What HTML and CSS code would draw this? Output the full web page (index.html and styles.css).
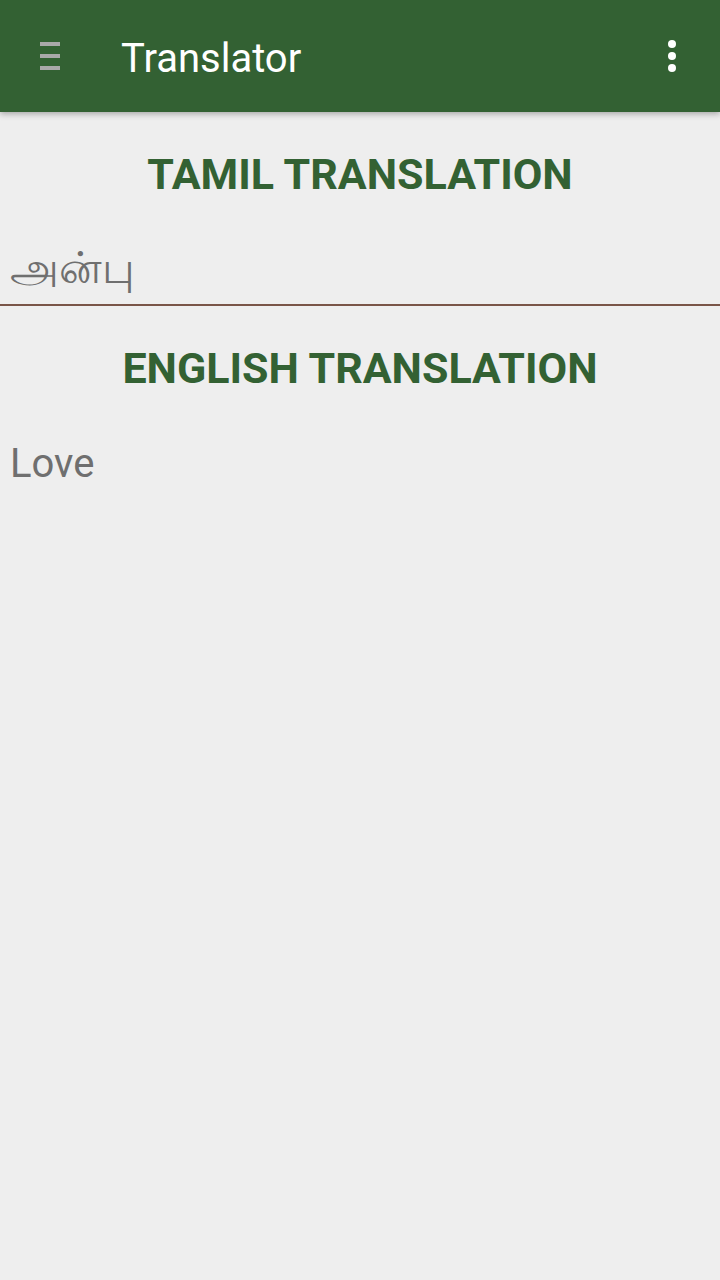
FILE: index.html
```html
<!DOCTYPE html>
<html lang="ta">
<head>
    <meta charset="UTF-8">
    <meta name="viewport" content="width=device-width, initial-scale=1.0">
    <title>Translator</title>
    <link rel="stylesheet" href="styles.css">
</head>
<body>
    <div class="toolbar">
        <div class="menu-icon">
            <span></span><span></span><span></span>
        </div>
        <h1 class="toolbar-title">Translator</h1>
        <div class="overflow-icon">
            <span></span><span></span><span></span>
        </div>
    </div>
    <div class="content">
        <h2 class="section-title">TAMIL TRANSLATION</h2>
        <div class="word-input">அன்பு</div>
        <h2 class="section-title english">ENGLISH TRANSLATION</h2>
        <p class="word-output">Love</p>
    </div>
</body>
</html>
```

FILE: styles.css
```css
body {
    margin: 0;
    padding: 0;
    background-color: #eeeeee;
    font-family: Roboto, "Noto Sans", sans-serif;
    color: #6f6f6f;
}
.toolbar {
    height: 112px;
    background: #336133; /* dark green app bar */
    display: flex;
    align-items: center;
    box-shadow: 0 2px 6px rgba(0, 0, 0, 0.3);
    position: relative;
}
.menu-icon {
    width: 20px;
    margin-left: 40px;
    display: flex;
    flex-direction: column;
    gap: 8px;
}
.menu-icon span {
    display: block;
    height: 4px;
    background: #a9a9a9;
}
.toolbar-title {
    margin: 4px 0 0 61px;
    flex: 1;
    font-weight: normal;
    font-size: 40px;
    color: #fff;
}
.overflow-icon {
    margin-right: 44px;
    display: flex;
    flex-direction: column;
    gap: 4px;
}
.overflow-icon span {
    display: block;
    width: 8px;
    height: 8px;
    border-radius: 50%;
    background: #fff;
}
.content {
    padding-top: 36px;
}
.section-title {
    margin: 0;
    text-align: center;
    font-size: 43px;
    font-weight: bold;
    color: #336133;
    line-height: 52px;
}
.section-title.english {
    margin-top: 36px;
}
.word-input {
    margin-top: 42px;
    padding: 0 10px 10px;
    font-size: 44px;
    line-height: 52px;
    border-bottom: 2px solid #795548; /* brown underline */
}
.word-output {
    margin: 46px 0 0;
    padding: 0 10px;
    font-size: 40px;
    line-height: 48px;
}
```
